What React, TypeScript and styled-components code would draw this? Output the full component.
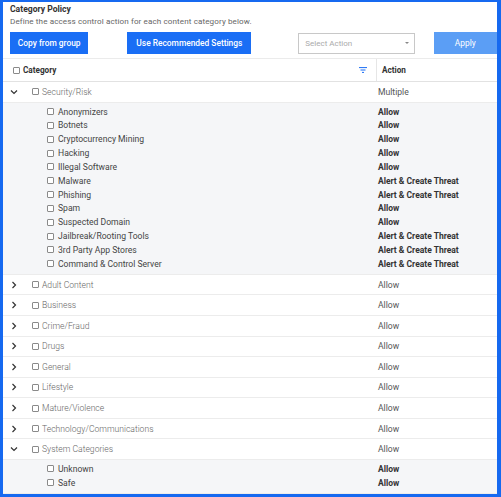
import React from "react";
import styled, { createGlobalStyle } from "styled-components";

type Child = { name: string; action: string };
type Group = { name: string; action: string; open?: boolean; items?: Child[] };

const groups: Group[] = [
  {
    name: "Security/Risk",
    action: "Multiple",
    open: true,
    items: [
      { name: "Anonymizers", action: "Allow" },
      { name: "Botnets", action: "Allow" },
      { name: "Cryptocurrency Mining", action: "Allow" },
      { name: "Hacking", action: "Allow" },
      { name: "Illegal Software", action: "Allow" },
      { name: "Malware", action: "Alert & Create Threat" },
      { name: "Phishing", action: "Alert & Create Threat" },
      { name: "Spam", action: "Allow" },
      { name: "Suspected Domain", action: "Allow" },
      { name: "Jailbreak/Rooting Tools", action: "Alert & Create Threat" },
      { name: "3rd Party App Stores", action: "Alert & Create Threat" },
      { name: "Command & Control Server", action: "Alert & Create Threat" },
    ],
  },
  { name: "Adult Content", action: "Allow" },
  { name: "Business", action: "Allow" },
  { name: "Crime/Fraud", action: "Allow" },
  { name: "Drugs", action: "Allow" },
  { name: "General", action: "Allow" },
  { name: "Lifestyle", action: "Allow" },
  { name: "Mature/Violence", action: "Allow" },
  { name: "Technology/Communications", action: "Allow" },
  {
    name: "System Categories",
    action: "Allow",
    open: true,
    items: [
      { name: "Unknown", action: "Allow" },
      { name: "Safe", action: "Allow" },
    ],
  },
];

const Chevron = ({ open }: { open?: boolean }) => (
  <svg width="8" height="8" viewBox="0 0 8 8">
    {open ? (
      <polyline points="1,2.5 4,5.5 7,2.5" fill="none" stroke="#333" strokeWidth="1.2" />
    ) : (
      <polyline points="2.5,1 5.5,4 2.5,7" fill="none" stroke="#333" strokeWidth="1.2" />
    )}
  </svg>
);

const FilterIcon = () => (
  <svg width="8" height="6" viewBox="0 0 8 6">
    <line x1="0" y1="0.6" x2="8" y2="0.6" stroke="#1a6ef5" strokeWidth="1" />
    <line x1="1.5" y1="3" x2="6.5" y2="3" stroke="#1a6ef5" strokeWidth="1" />
    <line x1="3" y1="5.4" x2="5" y2="5.4" stroke="#1a6ef5" strokeWidth="1" />
  </svg>
);

const App = () => {
  return (
    <Frame>
      <GlobalStyle />
      <Top>
        <Title>Category Policy</Title>
        <Subtitle>Define the access control action for each content category below.</Subtitle>
        <Toolbar>
          <PrimaryButton $w={79}>Copy from group</PrimaryButton>
          <PrimaryButton $w={125} $ml={39}>
            Use Recommended Settings
          </PrimaryButton>
          <Select>
            <span>Select Action</span>
            <Caret />
          </Select>
          <ApplyButton>Apply</ApplyButton>
        </Toolbar>
      </Top>
      <Table>
        <HeadRow>
          <HeadCat>
            <Box />
            <span>Category</span>
            <FilterWrap>
              <FilterIcon />
            </FilterWrap>
          </HeadCat>
          <HeadAction>Action</HeadAction>
        </HeadRow>
        {groups.map((g) => (
          <React.Fragment key={g.name}>
            <GroupRow>
              <CatCell>
                <Toggle>
                  <Chevron open={g.open} />
                </Toggle>
                <Box />
                <GroupName>{g.name}</GroupName>
              </CatCell>
              <GroupAction>{g.action}</GroupAction>
            </GroupRow>
            {g.open && g.items && (
              <Children>
                {g.items.map((c) => (
                  <ChildRow key={c.name}>
                    <ChildCat>
                      <Box />
                      <span>{c.name}</span>
                    </ChildCat>
                    <ChildAction>{c.action}</ChildAction>
                  </ChildRow>
                ))}
              </Children>
            )}
          </React.Fragment>
        ))}
      </Table>
    </Frame>
  );
};

export default App;

const GlobalStyle = createGlobalStyle`
  html, body {
    margin: 0;
    padding: 0;
    background: #1669f0;
  }
  body {
    font-family: Roboto, "Liberation Sans", Arial, sans-serif;
  }
`;

const Frame = styled.div`
  box-sizing: border-box;
  width: 501px;
  height: 497px;
  overflow: hidden;
  border-style: solid;
  border-color: #1669f0;
  border-width: 2px 4px 3px 3px;
  background: #ffffff;
  display: flex;
  flex-direction: column;
`;

const Top = styled.div`
  padding: 2px 0 0 7px;
`;

const Title = styled.div`
  font-size: 8.6px;
  font-weight: 700;
  color: #333;
  line-height: 11px;
`;

const Subtitle = styled.div`
  font-size: 8.1px;
  color: #666;
  line-height: 12px;
  letter-spacing: 0.1px;
`;

const Toolbar = styled.div`
  display: flex;
  align-items: center;
  margin-top: 5px;
  height: 22px;
`;

const PrimaryButton = styled.button<{ $w: number; $ml?: number }>`
  width: ${(p) => p.$w}px;
  margin-left: ${(p) => p.$ml || 0}px;
  height: 22px;
  border: none;
  background: #1a6ef5;
  color: #fff;
  font-family: Roboto, "Liberation Sans", Arial, sans-serif;
  font-size: 8.4px;
  font-weight: 500;
  padding: 0;
`;

const Select = styled.div`
  box-sizing: border-box;
  width: 117px;
  height: 21px;
  margin-left: 47px;
  border: 1px solid #c8c8c8;
  display: flex;
  align-items: center;
  justify-content: space-between;
  padding: 0 5px 0 6px;
  font-size: 8px;
  color: #aaa;
`;

const Caret = styled.span`
  width: 0;
  height: 0;
  border-left: 2px solid transparent;
  border-right: 2px solid transparent;
  border-top: 2.5px solid #888;
`;

const ApplyButton = styled.button`
  width: 64px;
  height: 22px;
  margin-left: 19px;
  border: none;
  background: #5b9ef5;
  color: #fff;
  font-family: Roboto, "Liberation Sans", Arial, sans-serif;
  font-size: 8.4px;
  padding: 0;
`;

const Table = styled.div`
  margin-top: 4px;
  display: flex;
  flex-direction: column;
`;

const HeadRow = styled.div`
  display: flex;
  height: 22px;
  border-top: 1px solid #ebebeb;
  border-bottom: 1px solid #e2e2e2;
  font-size: 8.2px;
  font-weight: 700;
  color: #333;
`;

const HeadCat = styled.div`
  width: 374px;
  display: flex;
  align-items: center;
  gap: 3px;
  padding-left: 10px;
  box-sizing: border-box;
  border-right: 1px solid #e6e6e6;
`;

const FilterWrap = styled.span`
  margin-left: auto;
  margin-right: 9px;
  display: flex;
`;

const HeadAction = styled.div`
  display: flex;
  align-items: center;
  padding-left: 5px;
`;

const Box = styled.span`
  box-sizing: border-box;
  width: 7px;
  height: 7px;
  border: 1px solid #8a8a8a;
  border-radius: 1px;
  background: #fff;
  flex: none;
`;

const GroupRow = styled.div`
  display: flex;
  height: 20.6px;
  box-sizing: border-box;
  border-bottom: 1px solid #ececec;
  font-size: 8.6px;
  color: #666;
`;

const CatCell = styled.div`
  width: 375px;
  display: flex;
  align-items: center;
  padding-left: 7px;
  box-sizing: border-box;
`;

const Toggle = styled.span`
  width: 22px;
  display: flex;
  align-items: center;
`;

const GroupName = styled.span`
  margin-left: 3px;
  font-weight: 300;
`;

const GroupAction = styled.div`
  display: flex;
  align-items: center;
  font-weight: 400;
  color: #555;
`;

const Children = styled.div`
  background: #f5f6f8;
  padding: 2px 0 3px;
  border-bottom: 1px solid #ececec;
`;

const ChildRow = styled.div`
  display: flex;
  height: 13.85px;
  align-items: center;
  font-size: 8.6px;
`;

const ChildCat = styled.div`
  width: 375px;
  display: flex;
  align-items: center;
  gap: 4px;
  padding-left: 44px;
  box-sizing: border-box;
  color: #444;
  font-weight: 400;
`;

const ChildAction = styled.div`
  font-weight: 700;
  font-size: 8.5px;
  color: #333;
`;
